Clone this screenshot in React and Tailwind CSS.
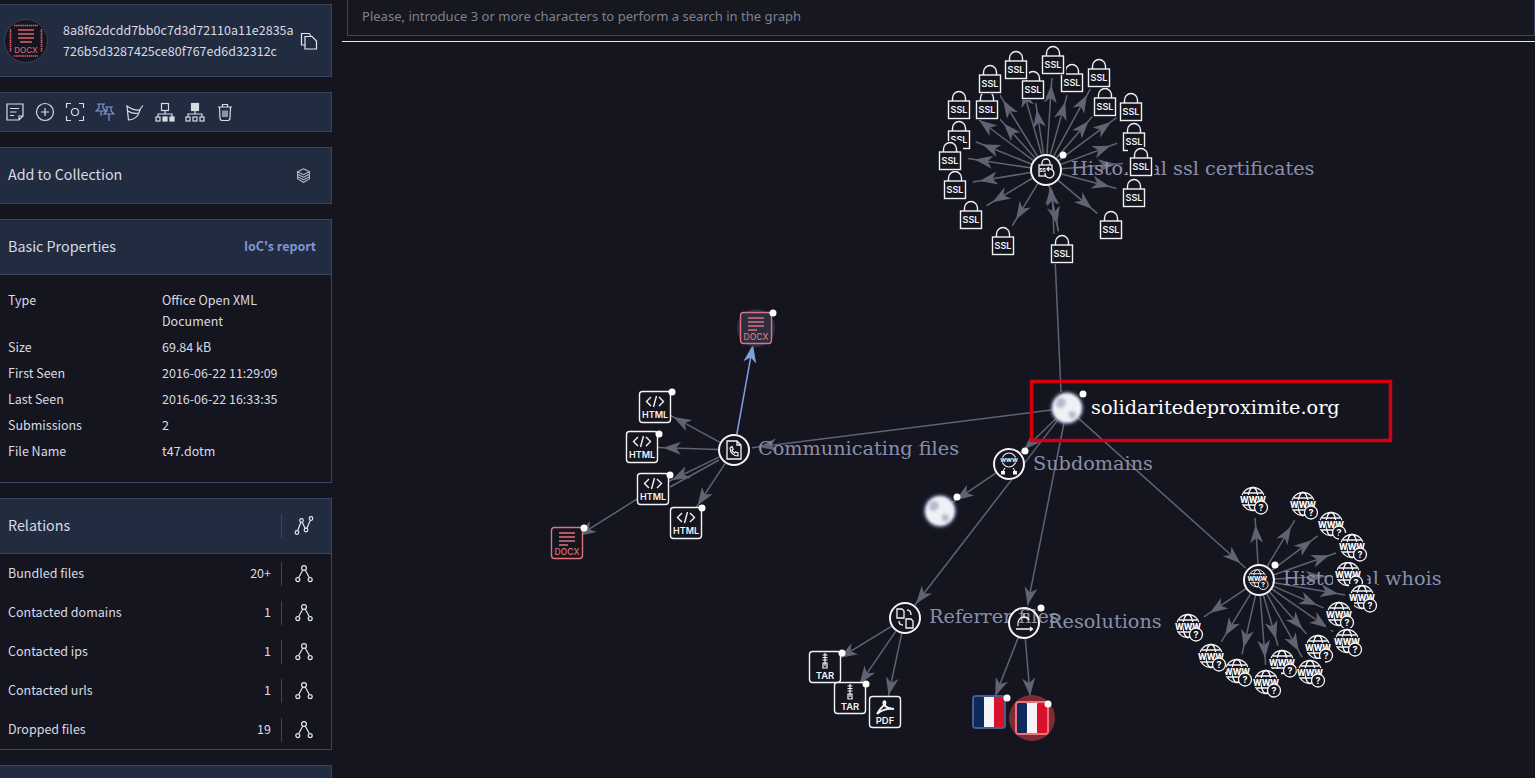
import React from "react";

const BG = "#14151f";
const EDGE = "#5f6373";
const RED = "#e0727c";
const LABEL = "#8a8fa9";
const sans = "Inter, 'Liberation Sans', sans-serif";
const serif = "'DejaVu Serif', serif";
const HEAD = "M0 0 L-18 -6.5 L-13 0 L-18 6.5 Z";

const sslNodes = [
  [1134, 137], [959, 135], [955, 185], [1134, 193], [987, 105], [1105, 102], [1072, 78], [1033, 85],
  [1016, 65], [1053, 60], [1099, 73], [990, 79], [1131, 107], [959, 105], [1141, 162], [950, 156],
  [971, 215], [1111, 225], [1003, 241], [1062, 249],
];
const whoisNodes = [
  [1349, 575], [1254, 500], [1304, 505], [1332, 525], [1353, 547], [1363, 598], [1340, 615], [1348, 642],
  [1319, 648], [1283, 663], [1311, 673], [1267, 683], [1238, 672], [1212, 657], [1189, 627],
];
const htmlNodes = [[655, 407], [642, 447], [653, 489], [686, 523]];
const fileNodes = [[825, 667, "TAR"], [850, 698, "TAR"], [885, 712, "PDF"]];

// line with a barbed arrow head a bit before its end
const Edge = ({ from, to, r0 = 16, r1 = 18, color = EDGE, back = 7 }) => {
  const dx = to[0] - from[0];
  const dy = to[1] - from[1];
  const d = Math.hypot(dx, dy);
  const ux = dx / d;
  const uy = dy / d;
  const ex = to[0] - ux * r1;
  const ey = to[1] - uy * r1;
  const tx = ex - ux * back;
  const ty = ey - uy * back;
  const angle = (Math.atan2(dy, dx) * 180) / Math.PI;
  return (
    <g>
      <line x1={from[0] + ux * r0} y1={from[1] + uy * r0} x2={ex} y2={ey} stroke={color} strokeWidth="1.5" />
      <path d={HEAD} fill={color} transform={`translate(${tx} ${ty}) rotate(${angle})`} />
    </g>
  );
};

const Dot = ({ x, y }) => <circle cx={x} cy={y} r="3.5" fill="#fff" />;

const Lock = ({ x, y }) => (
  <g transform={`translate(${x} ${y})`}>
    <rect x="-13" y="-15" width="26" height="30" fill={BG} />
    <path d="M-6.5 -4 V-7 a6.5 6.5 0 0 1 13 0 V-4" fill="none" stroke="#f1f1f4" strokeWidth="1.4" />
    <rect x="-10.5" y="-4" width="21" height="17.5" fill={BG} stroke="#f1f1f4" strokeWidth="1.4" />
    <text x="0" y="8" textAnchor="middle" fontSize="9" fontWeight="600" fill="#f1f1f4" fontFamily={sans}>SSL</text>
  </g>
);

const WwwMark = () => (
  <>
    <g fill="none" stroke="#f4f4f6" strokeWidth="1.3">
      <circle cx="-1" cy="-1" r="11.5" />
      <ellipse cx="-1" cy="-1" rx="5" ry="11.5" />
      <path d="M-10 -7 H8 M-10 5 H8" />
    </g>
    <text x="-1" y="2.5" textAnchor="middle" fontSize="11.5" fontWeight="700" fill="#fff" stroke={BG} strokeWidth="1.8" paintOrder="stroke" fontFamily={sans} textLength="26" lengthAdjust="spacingAndGlyphs">www</text>
    <circle cx="7" cy="7.5" r="6.5" fill={BG} stroke="#f4f4f6" strokeWidth="1.3" />
    <text x="7" y="10.8" textAnchor="middle" fontSize="9" fontWeight="700" fill="#fff" fontFamily={sans}>?</text>
  </>
);

const Www = ({ x, y }) => (
  <g transform={`translate(${x} ${y})`}>
    <rect x="-14" y="-14" width="28" height="29" fill={BG} />
    <WwwMark />
  </g>
);

const Html = ({ x, y }) => (
  <g transform={`translate(${x} ${y})`}>
    <rect x="-15.5" y="-15.5" width="31" height="31" rx="3" fill={BG} stroke="#f4f4f6" strokeWidth="1.4" />
    <path d="M-4 -10 L-8.5 -5.5 L-4 -1 M4 -10 L8.5 -5.5 L4 -1 M1.5 -11 L-1.5 0" fill="none" stroke="#f4f4f6" strokeWidth="1.4" />
    <text x="0" y="11" textAnchor="middle" fontSize="9" fontWeight="600" fill="#f4f4f6" fontFamily={sans}>HTML</text>
  </g>
);

const Docx = ({ x, y, halo }) => (
  <g transform={`translate(${x} ${y})`}>
    {halo && <circle r="19" fill="#2b2d41" />}
    <rect x="-15.5" y="-15.5" width="31" height="31" rx="3" fill={halo ? "#2b2d41" : BG} stroke={RED} strokeWidth="1.4" />
    <path d="M-8 -10 H8 M-8 -6 H8 M-8 -2 H8 M-8 2 H1" stroke={RED} strokeWidth="1.4" />
    <text x="0" y="12" textAnchor="middle" fontSize="8.5" fontWeight="500" fill={RED} fontFamily={sans}>DOCX</text>
  </g>
);

const Archive = ({ x, y, kind }) => (
  <g transform={`translate(${x} ${y})`}>
    <rect x="-15.5" y="-15.5" width="31" height="31" rx="3" fill={BG} stroke="#f4f4f6" strokeWidth="1.4" />
    {kind === "TAR" ? (
      <path d="M0 -14 V-1 M-2.5 -12 H2.5 M-2.5 -9.5 H2.5 M-2.5 -7 H2.5 M-2 -4 H2 L2 1 H-2 Z" fill="none" stroke="#f4f4f6" strokeWidth="1.2" />
    ) : (
      <path d="M-1 -11 C-3 -8 0 -4 9 -3 C3 -4 -4 -2 -8 2 M-1 -11 C1 -11 1 -8 -1 -6 M-8 2 C-6 -2 -3 -5 -1 -7" fill="none" stroke="#f4f4f6" strokeWidth="1.8" />
    )}
    <text x="0" y="11.5" textAnchor="middle" fontSize="9.5" fontWeight="600" fill="#f4f4f6" fontFamily={sans}>{kind}</text>
  </g>
);

const Flag = ({ x, y, halo }) => (
  <g transform={`translate(${x} ${y})`}>
    {halo && <circle r="23" fill="#7d2b35" />}
    <rect x="-17" y="-17" width="34" height="34" rx="4" fill={halo ? "#e8747c" : "#4b5b8c"} />
    <rect x="-15" y="-15" width="10" height="30" rx="1.5" fill="#0d2a5c" />
    <rect x="-5" y="-15" width="10" height="30" fill="#f4f4f6" />
    <rect x="5" y="-15" width="10" height="30" rx="1.5" fill="#d8122a" />
  </g>
);

const Planet = ({ x, y }) => (
  <g transform={`translate(${x} ${y})`}>
    <circle r="16.5" fill="#8f9cc4" opacity="0.7" filter="url(#soft)" />
    <circle r="14.5" fill="#f0f1f5" filter="url(#soft2)" />
    <path d="M-10 -9 C-4 -12 1 -8 -2 -3 C-4 1 -9 1 -11 -3 Z M2 4 C7 2 11 5 8 10 C5 12 1 10 2 4 Z" fill="#9298b0" opacity="0.6" filter="url(#soft)" />
  </g>
);

const Hub = ({ x, y, clear, children }) => (
  <g transform={`translate(${x} ${y})`}>
    <circle r="15" fill={clear ? "none" : BG} stroke="#f4f4f6" strokeWidth="2" />
    {children}
  </g>
);

const Graph = () => (
  <svg viewBox="342 42 1193 736" className="block w-full flex-1" xmlns="http://www.w3.org/2000/svg">
    <defs>
      <filter id="soft" x="-40%" y="-40%" width="180%" height="180%"><feGaussianBlur stdDeviation="1.6" /></filter>
      <filter id="soft2" x="-40%" y="-40%" width="180%" height="180%"><feGaussianBlur stdDeviation="0.8" /></filter>
    </defs>

    {/* edges of the main node */}
    <line x1="1061" y1="392" x2="1052" y2="190" stroke={EDGE} strokeWidth="1.5" />
    <path d={HEAD} fill={EDGE} transform="translate(1051 187) rotate(-92)" />
    <Edge from={[1067, 408]} to={[734, 450]} r0={14} />
    <Edge from={[1067, 408]} to={[1009, 464]} r0={14} r1={14} />
    <Edge from={[1009, 464]} to={[940, 511]} r1={12} />
    <Edge from={[1067, 408]} to={[905, 618]} r0={14} r1={16} back={2} />
    <Edge from={[1067, 408]} to={[1024, 623]} r0={14} r1={18} back={0} />
    <Edge from={[1067, 408]} to={[1259, 580]} r0={14} r1={18} />

    {/* ssl ring */}
    {sslNodes.map(([x, y]) => <Edge key={`${x}-${y}`} from={[1046, 170]} to={[x, y]} />)}
    <Edge from={[1062, 249]} to={[1046, 170]} r0={18} r1={16} back={2} />

    {/* whois ring */}
    {whoisNodes.map(([x, y]) => <Edge key={`${x}-${y}`} from={[1259, 580]} to={[x, y]} />)}

    {/* communicating files */}
    {htmlNodes.map(([x, y]) => <Edge key={`${x}-${y}`} from={[734, 450]} to={[x, y]} r1={15} back={6} />)}
    <line x1="719" y1="460" x2="670" y2="487" stroke={EDGE} strokeWidth="1.5" />
    <Edge from={[653, 489]} to={[567, 543]} r0={15} r1={13} back={0} />
    <Edge from={[734, 450]} to={[756, 328]} r0={16} r1={17} back={0} color="#7f9fe3" />

    {/* referrer + resolutions */}
    {fileNodes.map(([x, y]) => <Edge key={`${x}-${y}`} from={[905, 618]} to={[x, y]} r1={15} back={2} />)}
    <Edge from={[1024, 623]} to={[989, 712]} r1={17} back={0} />
    <Edge from={[1024, 623]} to={[1032, 718]} r1={22} back={0} />

    {/* labels sit under the nodes */}
    <g fontFamily={serif} fontSize="19.25" fill={LABEL}>
      <text x="1071" y="175">Historical ssl certificates</text>
      <text x="758" y="455">Communicating files</text>
      <text x="1033" y="470">Subdomains</text>
      <text x="1283" y="585">Historical whois</text>
      <text x="929" y="623">Referrer files</text>
      <text x="1048" y="628">Resolutions</text>
    </g>
    {/* node backgrounds hide part of the two long labels */}
    <rect x="1123" y="156" width="32" height="16" fill={BG} />
    <rect x="1333" y="566" width="34" height="24" fill={BG} />

    {sslNodes.map(([x, y]) => <Lock key={`${x}-${y}`} x={x} y={y} />)}
    {whoisNodes.map(([x, y]) => <Www key={`${x}-${y}`} x={x} y={y} />)}
    {htmlNodes.map(([x, y]) => <Html key={`${x}-${y}`} x={x} y={y} />)}
    {fileNodes.map(([x, y, kind]) => <Archive key={`${x}-${y}`} x={x} y={y} kind={kind} />)}

    <Docx x={756} y={328} halo />
    <Docx x={567} y={543} />
    <Flag x={989} y={712} />
    <Flag x={1032} y={718} halo />
    <Planet x={1067} y={408} />
    <Planet x={940} y={511} />

    <Hub x={1046} y={170}>
      <g fill="none" stroke="#f4f4f6" strokeWidth="1.3">
        <path d="M-4 -5 V-7 a4 4 0 0 1 8 0 V-5" />
        <rect x="-7" y="-5" width="13" height="11" />
        <path d="M-1 3 A4.5 4.5 0 1 0 3 -1 L1 -1 M3 -3 L1 -1 L3 1" fill={BG} />
      </g>
      <text x="-3.5" y="2" textAnchor="middle" fontSize="5" fontWeight="700" fill="#fff" fontFamily={sans}>SS</text>
    </Hub>
    <Hub x={734} y={450}>
      <path d="M-7 -9 H3 L7 -5 V9 H-7 Z M3 -9 V-5 H7" fill="none" stroke="#f4f4f6" strokeWidth="1.3" />
      <path d="M-4 -2 C-4 3 0 6 4 6 L4 3 L1.5 2 L0.5 3 C-0.5 2.5 -1.5 1.5 -2 0 L-0.8 -1 L-2 -3.5 Z" fill="none" stroke="#f4f4f6" strokeWidth="1.2" />
    </Hub>
    <Hub x={1009} y={464}>
      <g fill="none" stroke="#f4f4f6" strokeWidth="1.1">
        <circle cx="0" cy="-4" r="7" />
        <path d="M-4 4 L-6 7 M4 4 L6 7" />
      </g>
      <text x="0" y="-2" textAnchor="middle" fontSize="7" fontWeight="600" fill="#fff" stroke={BG} strokeWidth="1.2" paintOrder="stroke" fontFamily={sans}>www</text>
      <rect x="-8" y="7" width="4" height="3.5" fill="#f4f4f6" />
      <rect x="4" y="7" width="4" height="3.5" fill="#f4f4f6" />
    </Hub>
    <Hub x={905} y={618}>
      <g fill="none" stroke="#f4f4f6" strokeWidth="1.3">
        <path d="M-8 -9 H-3 L-1 -7 V0 H-8 Z" />
        <path d="M1 1 H6 L8 3 V10 H1 Z" />
        <path d="M2 -8 C5 -8 6 -6 6 -3 M-6 3 C-6 6 -5 7 -2 7" />
      </g>
    </Hub>
    <Hub x={1024} y={623} clear>
      <path d="M-6 3 C-7 -2 -4 -6 0 -6 C2 -6 4 -5 5 -3 M0 -9 V-5 M-8 6 H8 M6 4 L8.5 6 L6 8" fill="none" stroke="#f4f4f6" strokeWidth="1.3" />
    </Hub>
    <Hub x={1259} y={580}>
      <g transform="translate(-1 -1) scale(0.75)"><WwwMark /></g>
    </Hub>

    {[[1063, 155], [1275, 565], [1025, 451], [1083, 394], [957, 497], [1041, 608], [672, 392], [659, 434], [670, 475], [702, 508], [773, 313], [584, 528], [842, 653], [866, 684], [1007, 698], [1048, 704]].map(([x, y]) => (
      <Dot key={`${x}-${y}`} x={x} y={y} />
    ))}

    <text x="1091" y="414" fontFamily={serif} fontSize="19.25" fill="#fff">solidaritedeproximite.org</text>
    <rect x="1031.5" y="381.5" width="359" height="59" fill="none" stroke="#d4000f" strokeWidth="3.5" />
  </svg>
);

const Ico = ({ children, className = "w-5 h-5 text-[#d8dbe3]" }) => (
  <svg viewBox="0 0 20 20" fill="none" stroke="currentColor" strokeWidth="1.2" className={className}>{children}</svg>
);

const TreeIcon = () => (
  <Ico className="w-5 h-5 text-[#e4e6ec]">
    <circle cx="10" cy="4" r="2.4" />
    <circle cx="3.8" cy="15.6" r="2" />
    <circle cx="16.2" cy="15.6" r="2" />
    <path d="M8.8 6 L4.6 13.8 M11.2 6 L15.4 13.8" />
  </Ico>
);

const toolbar = [
  <Ico key="note"><path d="M2 2 H18 V14 L14 18 H2 Z M14 18 V14 H18 M5 6.5 H14 M5 10 H11.5 M5 13.5 H9" /></Ico>,
  <Ico key="add"><circle cx="10" cy="10" r="8.5" /><path d="M10 6 V14 M6 10 H14" /></Ico>,
  <Ico key="focus"><path d="M1.5 6 V1.5 H6 M14 1.5 H18.5 V6 M18.5 14 V18.5 H14 M6 18.5 H1.5 V14" /><circle cx="10" cy="10" r="3.5" /></Ico>,
  <Ico key="pin" className="w-5 h-5 text-[#7f95d6]"><path d="M2 2 H10 M4 2 V6 L1 9 H11 L8 6 V2 M6 9 V14 M10 5 H18 M12 5 V9 L9 12 H19 L16 9 V5 M14 12 V19" /></Ico>,
  <Ico key="cup"><path d="M2 4 C6 7 11 8.5 15 8 L13 13 C11 16 8 17.5 3.5 18 Z M3 9 C6 11 10 12 14 11 M14 8.5 L18 3.5" /></Ico>,
  <Ico key="tree1"><rect x="6.5" y="1.5" width="7" height="7" /><path d="M10 8.5 V12 M3 15 V12 H17 V15" /><rect x="1" y="15" width="4" height="4" /><rect x="8" y="15" width="4" height="4" fill="currentColor" /><rect x="15" y="15" width="4" height="4" fill="currentColor" /></Ico>,
  <Ico key="tree2"><rect x="6.5" y="1.5" width="7" height="7" fill="currentColor" /><path d="M10 8.5 V12 M3 15 V12 H17 V15" /><rect x="1" y="15" width="4" height="4" /><rect x="8" y="15" width="4" height="4" /><rect x="15" y="15" width="4" height="4" /></Ico>,
  <Ico key="trash"><path d="M3 5 H17 M7.5 5 V2.5 H12.5 V5 M4.5 5 L5 16 C5 17.5 6 18.5 7.5 18.5 H12.5 C14 18.5 15 17.5 15 16 L15.5 5 M8 8.5 V15 M10 8.5 V15 M12 8.5 V15" /></Ico>,
];

const props = [
  ["Type", "Office Open XML Document"],
  ["Size", "69.84 kB"],
  ["First Seen", "2016-06-22 11:29:09"],
  ["Last Seen", "2016-06-22 16:33:35"],
  ["Submissions", "2"],
  ["File Name", "t47.dotm"],
];

const relations = [
  ["Bundled files", "20+"],
  ["Contacted domains", "1"],
  ["Contacted ips", "1"],
  ["Contacted urls", "1"],
  ["Dropped files", "19"],
];

const panel = "border-y border-r border-[#3b4562] bg-[#222c40]";

export default function App() {
  return (
    <div className="flex h-screen w-full overflow-hidden bg-[#14151f] text-[#d8dbe3] font-['Noto_Sans_CJK_JP','Noto_Sans',sans-serif]">
      {/* Left column */}
      <aside className="flex w-[342px] shrink-0 flex-col gap-[15px] pt-1 pr-[10px]">
        <div className={`${panel} flex h-[73px] shrink-0 items-center pl-[4px] pr-[13px]`}>
          <svg viewBox="0 0 44 44" className="h-[44px] w-[44px] shrink-0">
            <circle cx="22" cy="22" r="21.5" fill="#15141f" stroke="#39415a" />
            <g stroke="#d9636d" strokeWidth="1.6" fill="none">
              <path d="M6.5 10 V33 M37.5 10 V33 M10 6.5 H34 M10 37 H34" strokeDasharray="1.5 0.6" />
              <path d="M14 11 H30 M14 15 H30 M14 19 H30 M16 23 H28" />
            </g>
            <text x="22" y="33.5" textAnchor="middle" fontSize="8" fontWeight="500" fill="#d9636d" fontFamily={sans}>DOCX</text>
          </svg>
          <div className="ml-[15px] w-[232px] pb-[2px] text-[12.5px] leading-[21px] break-all text-[#d8dbe3]">
            8a8f62dcdd7bb0c7d3d72110a11e2835a 726b5d3287425ce80f767ed6d32312c
          </div>
          <svg viewBox="0 0 18 18" fill="none" stroke="#e4e6ec" strokeWidth="1.2" className="ml-[5px] h-[18px] w-[18px] shrink-0">
            <path d="M5 13 H1.5 V1.5 H9 L11 4" />
            <path d="M5 4.5 H12 L16.5 9 V17 H5 Z" />
          </svg>
        </div>

        <div className={`${panel} flex h-[40px] shrink-0 items-center gap-[10px] pl-[5px]`}>{toolbar}</div>

        <div className={`${panel} flex h-[57px] shrink-0 items-center justify-between pl-2 pr-[19px] text-[14.3px]`}>
          <span className="pb-[3px]">Add to Collection</span>
          <Ico className="h-[17px] w-[17px] text-[#b9bdc9]">
            <path d="M10 2 L17 5.5 L10 9 L3 5.5 Z M3 8.5 L10 12 L17 8.5 M3 11.5 L10 15 L17 11.5 M3 14 L10 18 L17 14 M3 5.5 V14 M17 5.5 V14" />
          </Ico>
        </div>

        <section className="h-[264px] shrink-0 border-y border-r border-[#3b4562]">
          <div className="flex h-[55px] items-center justify-between border-b border-[#3b4562] bg-[#222c40] pb-[2px] pl-2 pr-[15px]">
            <span className="text-[14.3px]">Basic Properties</span>
            <span className="text-[12.5px] font-bold text-[#7f95d6]">IoC's report</span>
          </div>
          <dl className="grid grid-cols-[154px_140px] gap-y-[5px] pl-2 pt-[14px] text-[12.5px] leading-[21px]">
            {props.map(([k, v]) => (
              <React.Fragment key={k}>
                <dt>{k}</dt>
                <dd>{v}</dd>
              </React.Fragment>
            ))}
          </dl>
        </section>

        <section className="h-[252px] shrink-0 border-y border-r border-[#3b4562]">
          <div className="flex h-[55px] items-center border-b border-[#3b4562] bg-[#222c40] pl-2">
            <span className="flex-1 pb-[2px] text-[14.3px]">Relations</span>
            <div className="h-[24px] w-px bg-[#3b4562]" />
            <div className="w-[49px] pl-[12px]">
              <Ico className="h-5 w-5 text-[#e4e6ec]">
                <circle cx="3" cy="16.5" r="1.8" />
                <circle cx="7.5" cy="4.5" r="1.8" />
                <circle cx="12" cy="14" r="1.8" />
                <circle cx="17" cy="2.5" r="1.8" />
                <path d="M3.6 14.8 L6.8 6.2 M8.2 6.2 L11.2 12.4 M12.8 12.4 L16.3 4.2" />
              </Ico>
            </div>
          </div>
          {relations.map(([name, count]) => (
            <div key={name} className="flex h-[39px] items-center pl-2 text-[12.5px]">
              <span className="flex-1">{name}</span>
              <span className="pr-[10px]">{count}</span>
              <div className="h-[24px] w-px bg-[#3b4562]" />
              <div className="w-[49px] pl-[12px]"><TreeIcon /></div>
            </div>
          ))}
        </section>

        <div className={`${panel} h-[40px] shrink-0`} />
      </aside>

      {/* Search + graph */}
      <main className="flex min-w-0 flex-1 flex-col">
        <div className="ml-[5px] flex h-[36px] shrink-0 items-center border-x border-b border-[#3b4562] bg-[#16171f] pb-[2px] pl-[14px] font-['Noto_Sans',sans-serif] text-[13.06px] text-[#7d8291]">
          Please, introduce 3 or more characters to perform a search in the graph
        </div>
        <div className="mt-[5px] h-px shrink-0 bg-[#e6e6ea]" />
        <Graph />
      </main>
    </div>
  );
}
